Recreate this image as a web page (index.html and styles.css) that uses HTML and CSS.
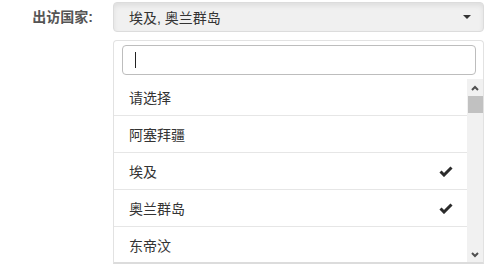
FILE: index.html
```html
<!DOCTYPE html>
<html lang="zh">
<head>
<meta charset="utf-8">
<link rel="stylesheet" href="styles.css">
</head>
<body>
<div class="form-row">
  <div class="label">出访国家:</div>
  <div class="select">
    <div class="btn">
      <span class="btn-text">埃及, 奥兰群岛</span>
      <span class="caret"></span>
    </div>
    <div class="menu">
      <div class="search"><span class="cursor"></span></div>
      <div class="list-wrap">
        <ul class="list">
          <li class="item">请选择</li>
          <li class="item">阿塞拜疆</li>
          <li class="item selected">埃及<svg class="check" viewBox="0 0 14 11"><polyline points="1.5,5.5 5,9 12.5,1.5"/></svg></li>
          <li class="item selected">奥兰群岛<svg class="check" viewBox="0 0 14 11"><polyline points="1.5,5.5 5,9 12.5,1.5"/></svg></li>
          <li class="item">东帝汶</li>
        </ul>
        <div class="scrollbar">
          <svg class="arrow" viewBox="0 0 8 6"><polyline points="1,5 4,2 7,5"/></svg>
          <div class="thumb"></div>
          <div class="track"></div>
          <svg class="arrow" viewBox="0 0 8 6"><polyline points="1,1 4,4 7,1"/></svg>
        </div>
      </div>
    </div>
  </div>
</div>
</body>
</html>
```

FILE: styles.css
```css
html, body {
  margin: 0;
  padding: 0;
  background: #fff;
}
body {
  font-family: "Liberation Sans", "Noto Sans CJK SC", sans-serif;
  font-size: 14px;
  color: #333;
}
.form-row {
  display: flex;
  align-items: flex-start;
  padding-top: 2px;
}
.label {
  width: 93px;
  margin-right: 20px;
  text-align: right;
  font-weight: bold;
  color: #555;
  line-height: 30px;
}
.select {
  width: 371px;
}
.btn {
  box-sizing: border-box;
  height: 30px;
  display: flex;
  align-items: center;
  justify-content: space-between;
  padding: 0 12px 0 15px;
  border: 1px solid #dcdcdc;
  border-radius: 4px;
  background: #f0f0f0;
  box-shadow: inset 0 3px 5px rgba(0, 0, 0, 0.07);
}
.btn-text {
  color: #333;
}
.caret {
  width: 0;
  height: 0;
  border-left: 4px solid transparent;
  border-right: 4px solid transparent;
  border-top: 4px solid #333;
}
.menu {
  box-sizing: border-box;
  margin-top: 8px;
  height: 224px;
  border: 1px solid #e2e2e2;
  border-bottom: 2px solid #dcdcdc;
  border-radius: 4px 4px 0 0;
  padding-top: 4px;
  background: #fff;
  overflow: hidden;
}
.search {
  box-sizing: border-box;
  height: 30px;
  margin: 0 7px 4px 8px;
  border: 1px solid #bdbdbd;
  border-radius: 4px;
  display: flex;
  align-items: center;
  padding-left: 12px;
}
.cursor {
  width: 1px;
  height: 16px;
  background: #222;
}
.list-wrap {
  display: flex;
  height: 184px;
}
.list {
  flex: 1;
  margin: 0;
  padding: 0;
  list-style: none;
}
.item {
  height: 36px;
  border-bottom: 1px solid #e6e6e6;
  display: flex;
  align-items: center;
  justify-content: space-between;
  padding: 0 14px 0 15px;
  color: #333;
}
.check {
  width: 14px;
  height: 11px;
}
.check polyline {
  fill: none;
  stroke: #2b2b2b;
  stroke-width: 3;
}
.scrollbar {
  width: 16px;
  background: #f1f1f1;
  display: flex;
  flex-direction: column;
  align-items: center;
}
.arrow {
  width: 8px;
  height: 6px;
  margin: 6px 0 5px;
}
.arrow polyline {
  fill: none;
  stroke: #505050;
  stroke-width: 2;
}
.thumb {
  width: 15px;
  height: 17px;
  background: #c1c1c1;
}
.track {
  flex: 1;
}
```
